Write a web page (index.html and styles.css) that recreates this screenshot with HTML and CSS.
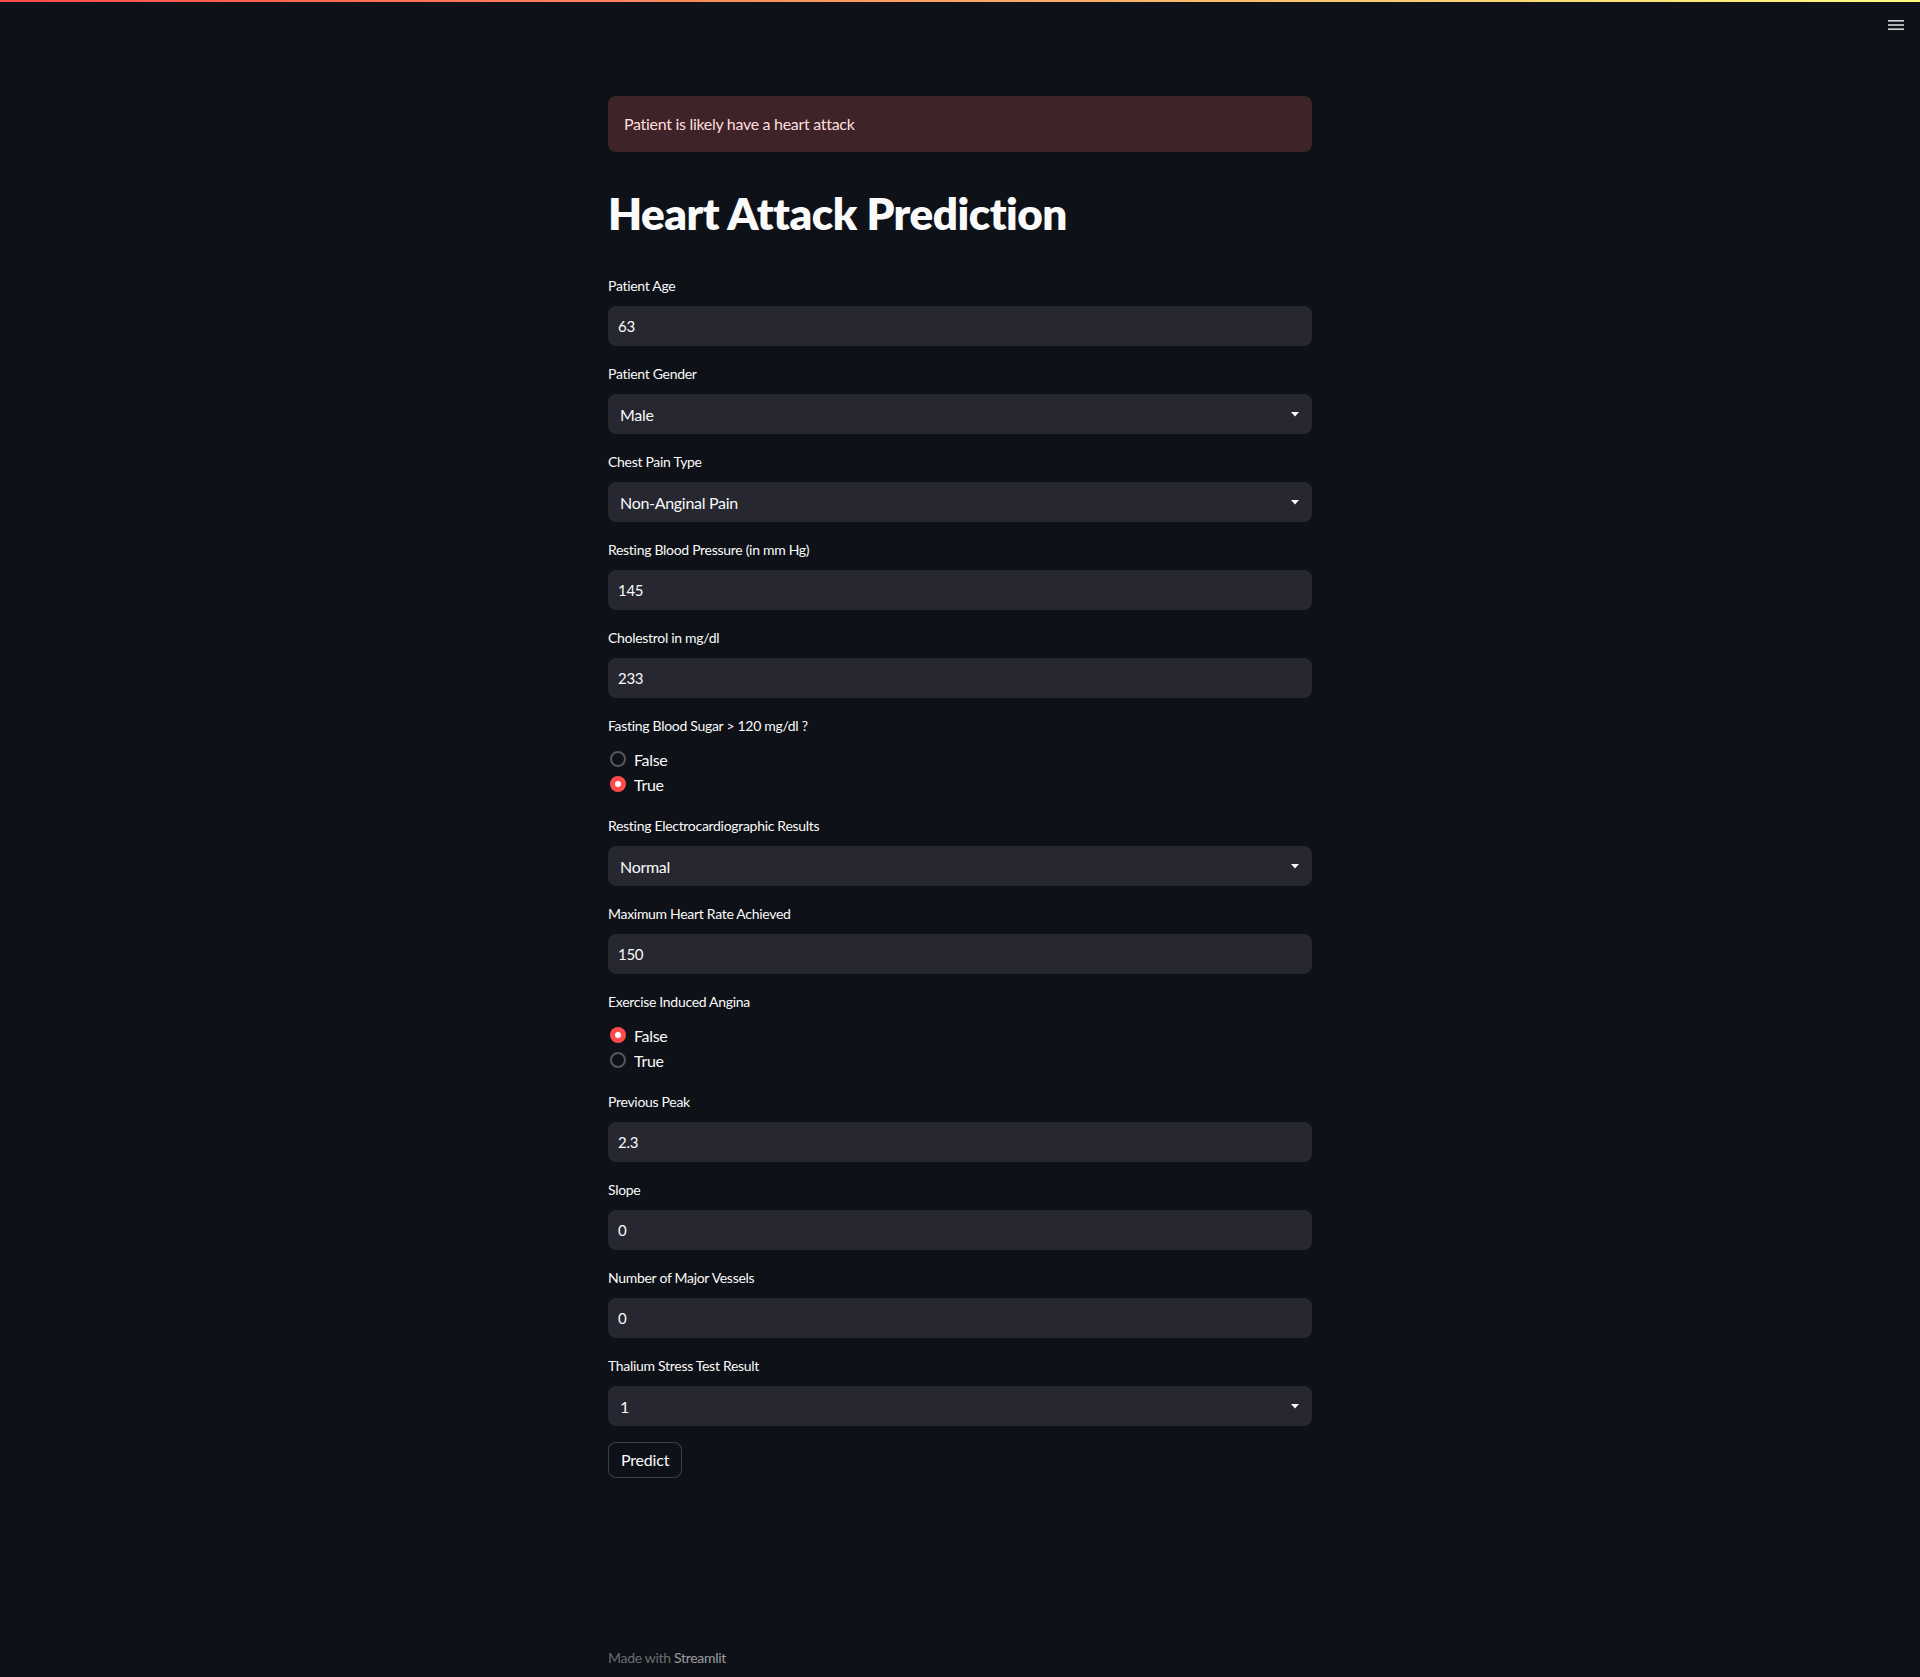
FILE: index.html
```html
<!DOCTYPE html>
<html lang="en">
<head>
<meta charset="utf-8">
<title>Heart Attack Prediction</title>
<link rel="stylesheet" href="styles.css">
</head>
<body>
<div class="decoration"></div>
<header class="app-header">
  <button class="menu-btn" aria-label="Main menu">
    <svg width="16" height="12" viewBox="0 0 16 12"><rect x="0" y="0" width="16" height="1.6" fill="#d6d6d8"/><rect x="0" y="4.2" width="16" height="1.6" fill="#d6d6d8"/><rect x="0" y="8.4" width="16" height="1.6" fill="#d6d6d8"/></svg>
  </button>
</header>
<main class="app">
  <div class="block">
    <div class="alert">Patient is likely have a heart attack</div>
    <h1 class="title">Heart Attack Prediction</h1>

    <div class="widget">
      <div class="label">Patient Age</div>
      <div class="field input">63</div>
    </div>

    <div class="widget">
      <div class="label">Patient Gender</div>
      <div class="field select"><span>Male</span><svg class="caret" width="8" height="5" viewBox="0 0 8 5"><path d="M0 0H8L4 4.5Z" fill="#fafafa"/></svg></div>
    </div>

    <div class="widget">
      <div class="label">Chest Pain Type</div>
      <div class="field select"><span>Non-Anginal Pain</span><svg class="caret" width="8" height="5" viewBox="0 0 8 5"><path d="M0 0H8L4 4.5Z" fill="#fafafa"/></svg></div>
    </div>

    <div class="widget">
      <div class="label">Resting Blood Pressure (in mm Hg)</div>
      <div class="field input">145</div>
    </div>

    <div class="widget">
      <div class="label">Cholestrol in mg/dl</div>
      <div class="field input">233</div>
    </div>

    <div class="widget">
      <div class="label">Fasting Blood Sugar &gt; 120 mg/dl ?</div>
      <div class="radio-group">
        <div class="radio"><span class="dot"></span>False</div>
        <div class="radio"><span class="dot checked"></span>True</div>
      </div>
    </div>

    <div class="widget">
      <div class="label">Resting Electrocardiographic Results</div>
      <div class="field select"><span>Normal</span><svg class="caret" width="8" height="5" viewBox="0 0 8 5"><path d="M0 0H8L4 4.5Z" fill="#fafafa"/></svg></div>
    </div>

    <div class="widget">
      <div class="label">Maximum Heart Rate Achieved</div>
      <div class="field input">150</div>
    </div>

    <div class="widget">
      <div class="label">Exercise Induced Angina</div>
      <div class="radio-group">
        <div class="radio"><span class="dot checked"></span>False</div>
        <div class="radio"><span class="dot"></span>True</div>
      </div>
    </div>

    <div class="widget">
      <div class="label">Previous Peak</div>
      <div class="field input">2.3</div>
    </div>

    <div class="widget">
      <div class="label">Slope</div>
      <div class="field input">0</div>
    </div>

    <div class="widget">
      <div class="label">Number of Major Vessels</div>
      <div class="field input">0</div>
    </div>

    <div class="widget">
      <div class="label">Thalium Stress Test Result</div>
      <div class="field select"><span>1</span><svg class="caret" width="8" height="5" viewBox="0 0 8 5"><path d="M0 0H8L4 4.5Z" fill="#fafafa"/></svg></div>
    </div>

    <div class="btn-row"><button class="btn">Predict</button></div>
  </div>
  <footer class="footer">Made with <span class="brand">Streamlit</span></footer>
</main>
</body>
</html>
```

FILE: styles.css
```css
html, body {
  margin: 0;
  padding: 0;
  background: #0e1117;
  color: #fafafa;
  font-family: Lato, "Noto Sans", "Liberation Sans", sans-serif;
}

.decoration {
  position: fixed;
  top: 0;
  left: 0;
  right: 0;
  height: 2px;
  background: linear-gradient(90deg, #ff4b4b, #fffd80);
  z-index: 10;
}

.app-header {
  position: absolute;
  top: 0;
  left: 0;
  right: 0;
  height: 46px;
  display: flex;
  justify-content: flex-end;
  align-items: flex-start;
}

.menu-btn {
  margin: 15px 10px 0 0;
  width: 28px;
  height: 22px;
  padding: 0;
  border: none;
  background: transparent;
  display: flex;
  align-items: center;
  justify-content: center;
}

.app {
  display: flex;
  flex-direction: column;
  min-height: 1677px;
}

.block {
  box-sizing: border-box;
  width: 100%;
  max-width: 736px;
  margin: 0 auto;
  padding: 96px 16px 158px;
  display: flex;
  flex-direction: column;
  gap: 16px;
  flex: 1;
}

.alert {
  box-sizing: border-box;
  height: 56px;
  padding: 16px;
  border-radius: 8px;
  background: rgba(255, 108, 108, 0.2);
  color: #ffdede;
  font-size: 16px;
  line-height: 24px;
  letter-spacing: -0.3px;
}

.title {
  margin: 0;
  padding: 19px 0 18px;
  font-size: 44px;
  line-height: 1.2;
  font-weight: 800;
  letter-spacing: -0.5px;
  color: #fafafa;
}

.widget {
  display: flex;
  flex-direction: column;
}

.label {
  min-height: 24px;
  margin-bottom: 8px;
  display: flex;
  align-items: center;
  font-size: 14px;
  letter-spacing: -0.3px;
  color: #fafafa;
}

.field {
  box-sizing: border-box;
  height: 40px;
  border-radius: 8px;
  background: #262730;
  display: flex;
  align-items: center;
  font-size: 16px;
  letter-spacing: -0.3px;
}

.input {
  padding: 0 10px;
  font-size: 15px;
}

.select {
  padding: 1px 13px 0 12px;
  justify-content: space-between;
}

.caret {
  display: block;
}

.radio-group {
  display: flex;
  flex-direction: column;
  padding: 1px 0 1px;
}

.radio {
  height: 25px;
  display: flex;
  align-items: center;
  font-size: 16px;
  letter-spacing: -0.3px;
  padding-left: 2px;
}

.dot {
  box-sizing: border-box;
  width: 16px;
  height: 16px;
  border-radius: 50%;
  border: 2px solid #56575c;
  background: #0e1117;
  margin-right: 8px;
  display: flex;
  align-items: center;
  justify-content: center;
}

.dot.checked {
  border: none;
  background: #ff4b4b;
}

.dot.checked::after {
  content: "";
  width: 6px;
  height: 6px;
  border-radius: 50%;
  background: #ffffff;
}

.btn-row {
  display: flex;
}

.btn {
  box-sizing: border-box;
  height: 36px;
  padding: 0 12px;
  border: 1px solid rgba(250, 250, 250, 0.2);
  border-radius: 8px;
  background: #0e1117;
  color: #fafafa;
  font-family: inherit;
  font-size: 16px;
  letter-spacing: -0.2px;
}

.footer {
  box-sizing: border-box;
  width: 100%;
  max-width: 736px;
  margin: 0 auto;
  padding: 8px 16px;
  font-size: 14px;
  line-height: 22px;
  letter-spacing: -0.3px;
  color: rgba(250, 250, 250, 0.4);
}

.brand {
  color: rgba(250, 250, 250, 0.6);
}
```
